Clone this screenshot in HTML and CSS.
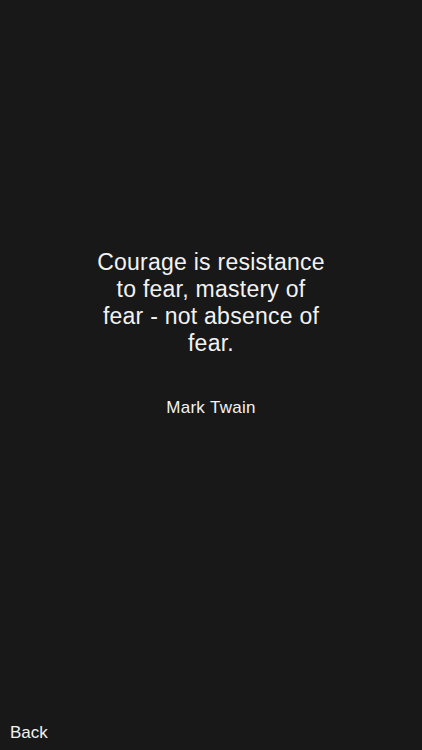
FILE: index.html
```html
<!DOCTYPE html>
<html>
<head>
<meta charset="utf-8">
<link rel="stylesheet" href="styles.css">
</head>
<body>
<div class="screen">
  <main class="content">
    <p class="quote">Courage is resistance to fear, mastery of fear - not absence of fear.</p>
    <p class="author">Mark Twain</p>
  </main>
  <footer class="footer">
    <span class="back">Back</span>
  </footer>
</div>
</body>
</html>
```
FILE: styles.css
```css
html, body {
  margin: 0;
  padding: 0;
  background: #181818;
}
.screen {
  width: 422px;
  height: 750px;
  display: flex;
  flex-direction: column;
  font-family: "Liberation Sans", Arial, sans-serif;
  color: #f2f2f2;
}
.content {
  flex: 1;
  display: flex;
  flex-direction: column;
  align-items: center;
  padding-top: 249px;
}
.quote {
  margin: 0;
  width: 234px;
  text-align: center;
  font-size: 23px;
  letter-spacing: 0.25px;
  line-height: 27px;
}
.author {
  margin: 41px 0 0;
  font-size: 17px;
  letter-spacing: 0.3px;
  line-height: 20px;
  text-align: center;
}
.footer {
  padding: 0 10px 7px;
}
.back {
  font-size: 17px;
  line-height: 20px;
  display: block;
}
```
